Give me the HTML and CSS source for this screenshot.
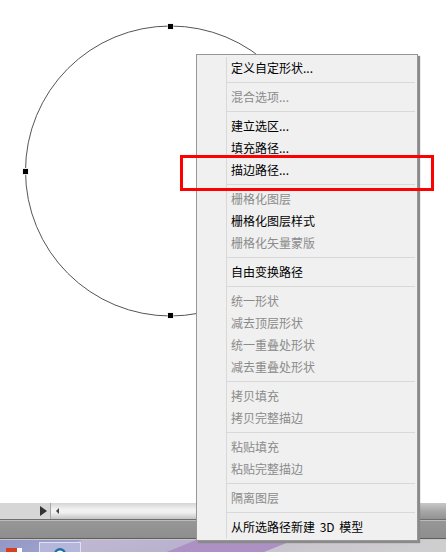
FILE: index.html
```html
<!DOCTYPE html>
<html lang="zh-CN">
<head>
<meta charset="utf-8">
<title>描边路径</title>
<link rel="stylesheet" href="styles.css">
</head>
<body>
<div class="app">
  <div class="canvas">
    <svg class="shape" width="446" height="503" viewBox="0 0 446 503">
      <circle class="path" cx="170.5" cy="171" r="145"/>
      <rect class="halo" x="22.5" y="168" width="6" height="7"/>
      <rect class="halo" x="167.5" y="23.5" width="6" height="6"/>
      <rect class="halo" x="167.5" y="312.5" width="6" height="6"/>
      <rect class="knob" x="23" y="169" width="5" height="5"/>
      <rect class="knob" x="168" y="24" width="5" height="5"/>
      <rect class="knob" x="168" y="313" width="5" height="5"/>
    </svg>
  </div>
  <div class="scrollbar">
    <div class="scroll-left"><span class="arrow-big"></span></div>
    <div class="scroll-track"><span class="arrow-small"></span></div>
    <div class="scroll-end"></div>
  </div>
  <div class="status"></div>
  <div class="taskbar">
    <div class="task-icon"></div>
    <div class="task-btn"><svg class="ie" width="12" height="4" viewBox="0 0 12 4"><circle cx="6" cy="6" r="4.8" fill="#fff" stroke="#1d6fa8" stroke-width="2.4"/></svg></div>
  </div>

  <div class="menu">
    <div class="menu-inner">
      <div class="item">定义自定形状...</div>
      <div class="sep"></div>
      <div class="item off">混合选项...</div>
      <div class="sep"></div>
      <div class="item">建立选区...</div>
      <div class="item">填充路径...</div>
      <div class="item">描边路径...</div>
      <div class="sep"></div>
      <div class="item off">栅格化图层</div>
      <div class="item">栅格化图层样式</div>
      <div class="item off">栅格化矢量蒙版</div>
      <div class="sep"></div>
      <div class="item">自由变换路径</div>
      <div class="sep"></div>
      <div class="item off">统一形状</div>
      <div class="item off">减去顶层形状</div>
      <div class="item off">统一重叠处形状</div>
      <div class="item off">减去重叠处形状</div>
      <div class="sep"></div>
      <div class="item off">拷贝填充</div>
      <div class="item off">拷贝完整描边</div>
      <div class="sep"></div>
      <div class="item off">粘贴填充</div>
      <div class="item off">粘贴完整描边</div>
      <div class="sep"></div>
      <div class="item off">隔离图层</div>
      <div class="sep"></div>
      <div class="item wide">从所选路径新建 3D 模型</div>
    </div>
  </div>
  <div class="highlight"></div>
</div>
</body>
</html>
```

FILE: styles.css
```css
* { box-sizing: border-box; }
html, body { margin: 0; padding: 0; }
body { background: #fff; font-family: "Noto Sans CJK SC", "Noto Sans", sans-serif; }

.app {
  position: relative;
  width: 446px;
  height: 552px;
  overflow: hidden;
  display: flex;
  flex-direction: column;
}

.canvas { height: 503px; background: #fff; }
.shape { display: block; }
.path { fill: none; stroke: #555; stroke-width: 1; }
.halo { fill: #e8e8e8; }
.knob { fill: #000; }

.scrollbar {
  height: 17px;
  display: flex;
  border-bottom: 1px solid #6e6e6e;
}
.scroll-left {
  width: 51px;
  background: #d6d6d6;
  border-right: 1px solid #a8a8a8;
  display: flex;
  align-items: center;
  justify-content: flex-end;
  padding-right: 3px;
}
.arrow-big {
  width: 0;
  height: 0;
  border-left: 7px solid #333;
  border-top: 5px solid transparent;
  border-bottom: 5px solid transparent;
}
.scroll-track {
  flex: 1;
  background: linear-gradient(#d4d4d4, #f2f2f2 40%, #f0f0f0 60%, #c4c4c4);
  display: flex;
  align-items: center;
  padding-left: 5px;
}
.scroll-end {
  width: 27px;
  background: linear-gradient(#c8c8c8, #a8a8a8 50%, #929292);
}
.arrow-small {
  width: 0;
  height: 0;
  border-right: 3px solid #444;
  border-top: 3px solid transparent;
  border-bottom: 3px solid transparent;
}

.status {
  height: 19px;
  background: linear-gradient(#bcbcbc 0, #bcbcbc 1px, #969696 1px, #8e8e8e 100%);
  border-bottom: 1px solid #5e5e5e;
}

.taskbar {
  flex: 1;
  display: flex;
  gap: 17px;
  padding-left: 6px;
  align-items: flex-end;
  border-top: 1px solid #c8c8c8;
  background: linear-gradient(158deg, #9297c6 0, #9ea2cc 17%, #bfb7d2 17.5%, #b9b2cf 41%, #ad90c4 41.5%, #ad90c4 61.5%, #c9c5cf 62%, #cfcfcf 100%);
}
.task-icon {
  width: 16px;
  height: 4px;
  background: linear-gradient(90deg, #d8401c 0, #d8401c 70%, #fff 70%);
}
.task-btn {
  width: 42px;
  height: 10px;
  display: flex;
  justify-content: center;
  align-items: flex-end;
  border: 1px solid #e0e0f0;
  border-bottom: 0;
  background: #b4b6da;
}
.ie { display: block; }

.menu {
  position: absolute;
  left: 196px;
  top: 54px;
  width: 222px;
  height: 487px;
  padding: 2px 2px 2px;
  background: #f0f0f0;
  border: 1px solid #979797;
  box-shadow: 2px 2px 1px #8a8a8a;
}
.menu-inner { margin-left: 1px; }
.item {
  height: 22px;
  padding-left: 31px;
  font-size: 12px;
  line-height: 21px;
  color: #000;
  white-space: pre;
  position: relative;
}
.item.wide { word-spacing: 2px; }
.item::before, .sep::before {
  content: "";
  position: absolute;
  left: 26px;
  top: 0;
  bottom: 0;
  width: 1px;
  background: #d8d8d8;
}
.item.off { color: #8b8b8b; }
.sep {
  height: 7px;
  position: relative;
}
.sep::after {
  content: "";
  position: absolute;
  left: 27px;
  right: 0;
  top: 3px;
  height: 1px;
  background: #d8d8d8;
}

.highlight {
  position: absolute;
  left: 180px;
  top: 155px;
  width: 254px;
  height: 36px;
  border: 3px solid #f00;
}
```
